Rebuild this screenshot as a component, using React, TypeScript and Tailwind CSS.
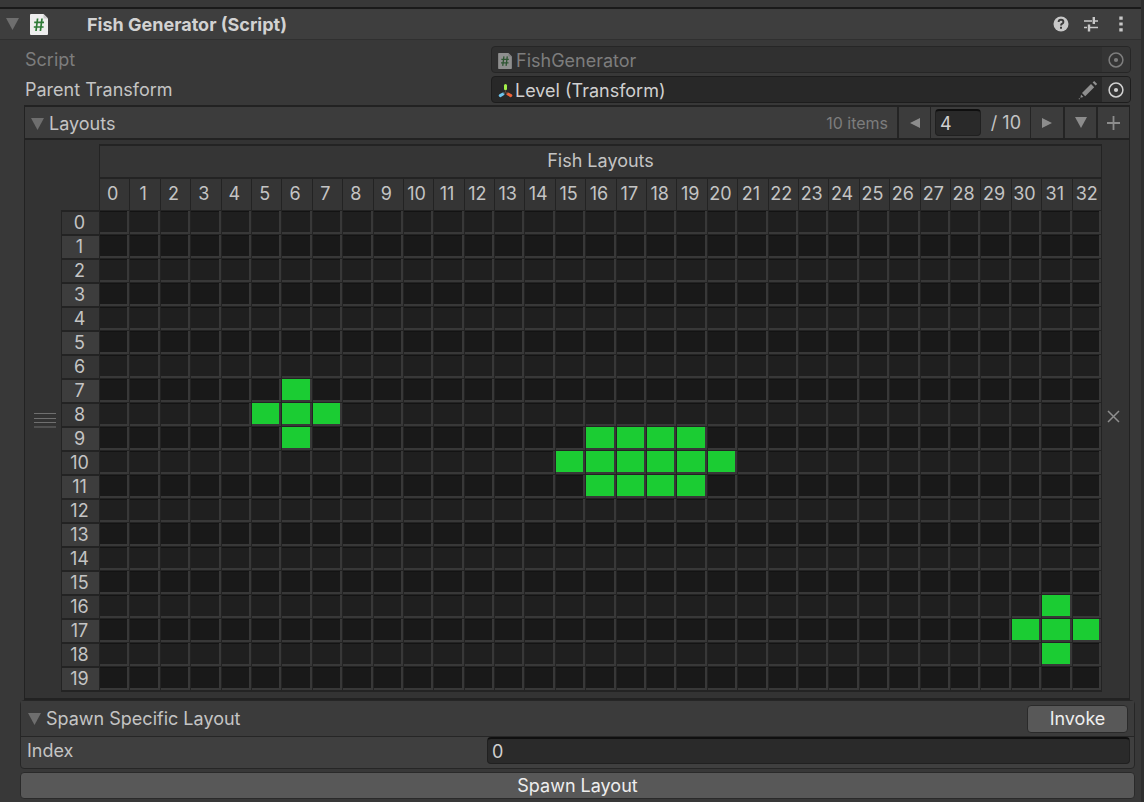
import React, { useState } from "react";

const COLUMNS = 33;
const ROWS = 20;
const COLUMN_INDEXES = Array.from({ length: COLUMNS }, (_, i) => i);
const ROW_INDEXES = Array.from({ length: ROWS }, (_, i) => i);

const INITIAL_CELLS: Record<number, number[]> = {
  7: [6],
  8: [5, 6, 7],
  9: [6, 16, 17, 18, 19],
  10: [15, 16, 17, 18, 19, 20],
  11: [16, 17, 18, 19],
  16: [31],
  17: [30, 31, 32],
  18: [31],
};

function initialKeys(): Set<string> {
  const keys = new Set<string>();
  for (const [row, cols] of Object.entries(INITIAL_CELLS)) {
    cols.forEach((col) => keys.add(`${row}:${col}`));
  }
  return keys;
}

function Foldout() {
  return (
    <svg width="13" height="12" viewBox="0 0 13 12" className="shrink-0" aria-hidden="true">
      <path d="M0 0H13L6.5 12Z" fill="#6e6e6e" />
    </svg>
  );
}

function ScriptIcon({ className }: { className: string }) {
  return (
    <svg viewBox="0 0 18 21" className={className} aria-hidden="true">
      <path d="M1 0H13.5L18 4.5V20Q18 21 17 21H1Q0 21 0 20V1Q0 0 1 0Z" fill="#eeeeee" />
      <path d="M13.5 0L18 4.5H13.5Z" fill="#c9c9c9" />
      <path
        d="M7.6 4.5L6 17M12 4.5L10.4 17M4.2 8.4H14M3.8 13H13.6"
        stroke="#2d7a35"
        strokeWidth="1.7"
        fill="none"
      />
    </svg>
  );
}

function TransformIcon() {
  return (
    <svg width="15" height="15" viewBox="0 0 15 15" className="shrink-0" aria-hidden="true">
      <path d="M7.5 2.4V5.8" stroke="#a4f04a" strokeWidth="3" strokeLinecap="round" />
      <path d="M5 11L2.2 12.6" stroke="#6fc5ee" strokeWidth="3" strokeLinecap="round" />
      <path d="M10 11L12.8 12.6" stroke="#f0643a" strokeWidth="3" strokeLinecap="round" />
      <path d="M7.5 7V9.2L5.6 10.4M7.5 9.2L9.4 10.4" stroke="#5a4a3c" strokeWidth="1" fill="none" />
    </svg>
  );
}

function PickerIcon({ color }: { color: string }) {
  return (
    <svg width="16" height="16" viewBox="0 0 16 16" aria-hidden="true">
      <circle cx="8" cy="8" r="6.9" fill="none" stroke={color} strokeWidth="1.5" />
      <circle cx="8" cy="8" r="2.1" fill={color} />
    </svg>
  );
}

function PencilIcon() {
  return (
    <svg width="20" height="20" viewBox="0 0 20 20" aria-hidden="true">
      <path d="M4 13L13 4L16.2 7.2L7.2 16.2Z" fill="#8f8f8f" />
      <path d="M14.6 2.6L16.2 1L19.2 4L17.6 5.6Z" fill="#8f8f8f" />
      <path d="M3 14.6L5.4 17L2.4 17.8Z" fill="#8f8f8f" />
      <path d="M0.8 18.2H1.8V19.2H0.8Z" fill="#8f8f8f" />
    </svg>
  );
}

function HelpIcon() {
  return (
    <svg width="16" height="16" viewBox="0 0 16 16" aria-hidden="true">
      <circle cx="8" cy="8" r="7.5" fill="#c8c8c8" />
      <path
        d="M5.6 6.1Q5.6 3.7 8 3.7T10.4 5.9Q10.4 7 9.2 7.7Q8 8.3 8 9.5"
        fill="none"
        stroke="#3a3a3a"
        strokeWidth="1.9"
      />
      <path d="M7 10.8H9V12.7H7Z" fill="#3a3a3a" />
    </svg>
  );
}

function PresetIcon() {
  return (
    <svg width="16" height="16" viewBox="0 0 16 16" aria-hidden="true">
      <path d="M1 5H9M12 5H15M1 11.5H4M7 11.5H15" stroke="#c8c8c8" strokeWidth="1.5" />
      <path d="M10.8 1V8M6 8.5V15.5" stroke="#c8c8c8" strokeWidth="2.4" />
    </svg>
  );
}

function KebabIcon() {
  return (
    <svg width="4" height="16" viewBox="0 0 4 16" aria-hidden="true">
      <path d="M0.3 0.5H3.7V3.7H0.3ZM0.3 6.4H3.7V9.6H0.3ZM0.3 12.3H3.7V15.5H0.3Z" fill="#c8c8c8" />
    </svg>
  );
}

function ToolbarButton({ label, children }: { label: string; children: React.ReactNode }) {
  return (
    <button
      type="button"
      aria-label={label}
      className="flex w-[33px] items-center justify-center border-l-2 border-[#242424]"
    >
      {children}
    </button>
  );
}

function LayoutTable() {
  const [filled, setFilled] = useState<Set<string>>(initialKeys);

  const toggle = (key: string) =>
    setFilled((previous) => {
      const next = new Set(previous);
      if (!next.delete(key)) next.add(key);
      return next;
    });

  return (
    <table className="w-full table-fixed border-separate border-spacing-0">
      <colgroup>
        <col className="w-[38px]" />
        {COLUMN_INDEXES.map((col) => (
          <col key={col} />
        ))}
      </colgroup>
      <thead>
        <tr className="h-[33px]">
          <td className="p-0" />
          <th
            colSpan={COLUMNS}
            scope="colgroup"
            className="border-x border-t-2 border-[#232323] bg-[#353535] p-0 pb-0.5 font-normal"
          >
            Fish Layouts
          </th>
        </tr>
        <tr className="h-[33px]">
          <td className="p-0" />
          {COLUMN_INDEXES.map((col) => (
            <th
              key={col}
              scope="col"
              className="border-t-2 border-l border-[#232323] bg-[#353535] p-0 pr-1 pb-0.5 font-normal last:border-r last:pr-0"
            >
              {col}
            </th>
          ))}
        </tr>
      </thead>
      <tbody>
        {ROW_INDEXES.map((row) => (
          <tr key={row} className="group h-6">
            <th
              scope="row"
              className="border-t-2 border-l border-[#232323] bg-[#353535] p-0 pr-0.5 leading-[22px] font-normal group-even:bg-[#3d3d3d] group-last:border-b-2"
            >
              {row}
            </th>
            {COLUMN_INDEXES.map((col) => {
              const key = `${row}:${col}`;
              const on = filled.has(key);
              return (
                <td
                  key={col}
                  className="h-6 border-t border-l border-[#232323] bg-[#383838] p-0 pr-0.5 pb-0.5 group-last:border-b-2 last:border-r"
                >
                  <button
                    type="button"
                    aria-label={`Row ${row}, column ${col}`}
                    aria-pressed={on}
                    onClick={() => toggle(key)}
                    className={
                      on
                        ? "block h-[21px] w-full bg-[#1bcc33]"
                        : "block h-[21px] w-full border-t border-[#131313] bg-[#1f1f1f] group-even:bg-[#191919]"
                    }
                  />
                </td>
              );
            })}
          </tr>
        ))}
      </tbody>
    </table>
  );
}

export default function App() {
  return (
    <div className="min-h-screen border-r-[3px] border-[#2e2e2e] bg-[#383838] pt-[7px] font-['Inter',sans-serif] text-[18px] leading-6 text-[#c4c4c4]">
      <header className="flex h-[33px] items-center border-t-2 border-b border-t-[#1a1a1a] border-b-[#303030] bg-[#3e3e3e] pr-[18px] pl-1.5">
        <button type="button" aria-label="Toggle component" className="mr-[11px]">
          <Foldout />
        </button>
        <ScriptIcon className="h-[21px] w-[18px]" />
        <h1 className="ml-[39px] flex-1 pt-0.5 font-bold text-[#d2d2d2]">Fish Generator (Script)</h1>
        <button type="button" aria-label="Help" className="mr-3.5">
          <HelpIcon />
        </button>
        <button type="button" aria-label="Presets" className="mr-5">
          <PresetIcon />
        </button>
        <button type="button" aria-label="More options">
          <KebabIcon />
        </button>
      </header>

      <main>
        <div className="flex flex-col gap-[3px] pt-1.5 pr-2.5 pb-0.5 pl-[25px]">
          <div className="flex h-[27px] items-center text-[#7d7d7d]">
            <span className="w-[466px]">Script</span>
            <div className="flex h-full min-w-0 flex-1 items-stretch overflow-hidden rounded border border-[#262626] bg-[#303030]">
              <div className="flex flex-1 items-center gap-1 pt-0.5 pl-1.5">
                <ScriptIcon className="h-4 w-3.5 opacity-50" />
                <span>FishGenerator</span>
              </div>
              <button
                type="button"
                disabled
                aria-label="Select script"
                className="flex w-7 items-center justify-center bg-[#353535]"
              >
                <PickerIcon color="#7d7d7d" />
              </button>
            </div>
          </div>
          <div className="flex h-[27px] items-center">
            <span className="w-[466px]">Parent Transform</span>
            <div className="flex h-full min-w-0 flex-1 items-stretch overflow-hidden rounded border border-[#1d1d1d] bg-[#282828]">
              <div className="flex flex-1 items-center gap-0.5 pt-0.5 pl-1.5">
                <TransformIcon />
                <span className="text-[#d0d0d0]">Level (Transform)</span>
              </div>
              <button type="button" aria-label="Edit transform" className="mr-1">
                <PencilIcon />
              </button>
              <button
                type="button"
                aria-label="Select transform"
                className="flex w-7 items-center justify-center bg-[#353535]"
              >
                <PickerIcon color="#d0d0d0" />
              </button>
            </div>
          </div>
        </div>

        <section className="mr-[11px] ml-6 border-x border-y-2 border-[#222222] bg-[#333333]">
          <div className="flex h-[33px] items-stretch border-b-2 border-[#222222] bg-[#3c3c3c]">
            <button type="button" className="flex flex-1 items-center gap-[5px] pt-0.5 pl-1.5">
              <Foldout />
              <span>Layouts</span>
            </button>
            <span className="self-center pr-[9px] text-base text-[#7d7d7d]">10 items</span>
            <ToolbarButton label="Previous page">
              <svg width="10" height="10" viewBox="0 0 10 10" aria-hidden="true">
                <path d="M10 0V10L0 5Z" fill="#8c8c8c" />
              </svg>
            </ToolbarButton>
            <div className="flex items-center border-x border-[#242424] pl-1">
              <input
                type="text"
                aria-label="Page"
                defaultValue="4"
                className="h-[27px] w-[46px] rounded border border-t-2 border-[#202020] border-t-[#0f0f0f] bg-[#292929] px-1 text-[#d0d0d0] outline-none"
              />
              <span className="w-[49px] pr-[9px] text-right whitespace-nowrap">/ 10</span>
            </div>
            <button type="button" aria-label="Next page" className="flex w-8 items-center justify-center">
              <svg width="10" height="10" viewBox="0 0 10 10" aria-hidden="true">
                <path d="M0 0V10L10 5Z" fill="#8c8c8c" />
              </svg>
            </button>
            <ToolbarButton label="Show all">
              <svg width="12" height="11" viewBox="0 0 12 11" aria-hidden="true">
                <path d="M0 0H12L6 11Z" fill="#8c8c8c" />
              </svg>
            </ToolbarButton>
            <ToolbarButton label="Add layout">
              <svg width="13" height="14" viewBox="0 0 13 14" aria-hidden="true">
                <path d="M6.5 0V14M0 7H13" stroke="#8c8c8c" strokeWidth="1.8" />
              </svg>
            </ToolbarButton>
          </div>

          <div className="flex items-stretch pt-1 pb-1.5">
            <button type="button" aria-label="Reorder" className="flex w-9 items-center justify-center pt-1 pl-1">
              <svg width="22" height="16" viewBox="0 0 22 16" aria-hidden="true">
                <path d="M0 1.5H22M0 6.5H22M0 10.5H22M0 15H22" stroke="#6f6f6f" strokeWidth="1" />
              </svg>
            </button>
            <div className="min-w-0 flex-1">
              <LayoutTable />
            </div>
            <button type="button" aria-label="Remove layout" className="flex w-[27px] items-center justify-center pr-1 pb-1">
              <svg width="13" height="13" viewBox="0 0 13 13" aria-hidden="true">
                <path d="M1 1L12 12M12 1L1 12" stroke="#8f8f8f" strokeWidth="1.5" />
              </svg>
            </button>
          </div>
        </section>

        <section className="mr-1.5 ml-5 rounded border border-[#262626] bg-[#3f3f3f]">
          <div className="flex h-9 items-center justify-between border-b border-[#262626] bg-[#3b3b3b] pr-1.5 pl-[7px]">
            <button type="button" className="flex items-center gap-[5px]">
              <Foldout />
              <span>Spawn Specific Layout</span>
            </button>
            <button
              type="button"
              className="h-7 w-[101px] rounded border border-[#2a2a2a] bg-[#585858] text-[#eeeeee]"
            >
              Invoke
            </button>
          </div>
          <div className="flex items-start pr-1 pb-1 pl-1.5">
            <label htmlFor="spawn-index" className="w-[460px] pt-0.5">
              Index
            </label>
            <input
              id="spawn-index"
              type="text"
              defaultValue="0"
              className="h-[27px] min-w-0 flex-1 rounded border border-t-2 border-[#202020] border-t-[#0f0f0f] bg-[#2a2a2a] px-1 text-[#d0d0d0] outline-none"
            />
          </div>
        </section>
        <button
          type="button"
          className="mt-[3px] mr-1.5 ml-5 flex h-[27px] w-[calc(100%-26px)] items-center justify-center rounded border border-[#2a2a2a] bg-[#585858] text-[#eeeeee]"
        >
          Spawn Layout
        </button>
      </main>
    </div>
  );
}
